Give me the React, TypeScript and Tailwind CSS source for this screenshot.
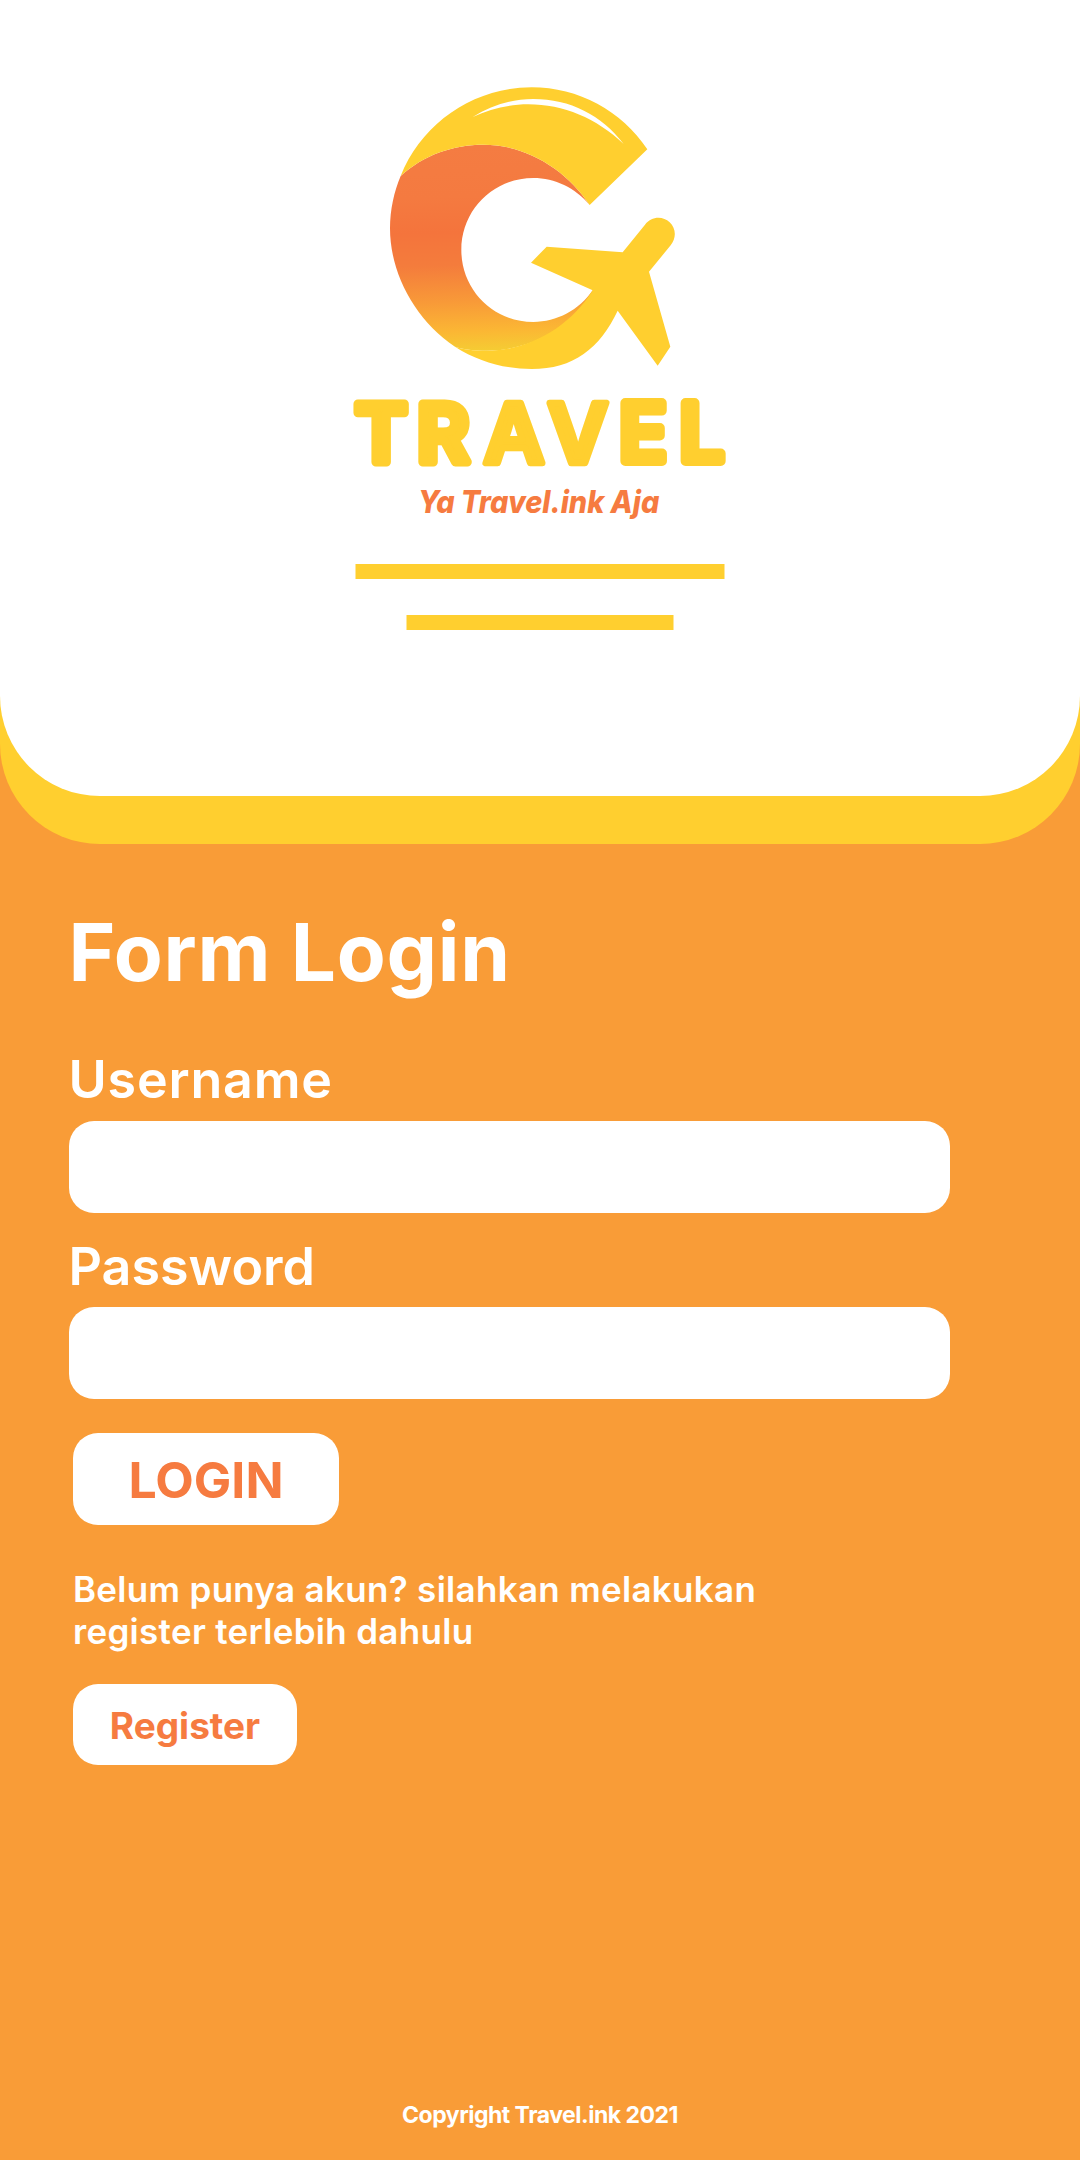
function Logo() {
  return (
    <svg className="mt-[60px] h-[470px] w-[400px] shrink-0" viewBox="0 0 1200 1410" role="img" aria-label="Travel.ink">
      <defs>
        <linearGradient id="crescent" gradientUnits="userSpaceOnUse" x1="420" y1="254" x2="440" y2="872">
          <stop offset="0" stopColor="#f47c42" />
          <stop offset="0.25" stopColor="#f47a40" />
          <stop offset="0.42" stopColor="#f4743c" />
          <stop offset="0.58" stopColor="#f47c3c" />
          <stop offset="0.76" stopColor="#f89a38" />
          <stop offset="0.9" stopColor="#fbb634" />
          <stop offset="1" stopColor="#f5cc33" />
        </linearGradient>
      </defs>
      <path
        fill="url(#crescent)"
        d="M182 348C250 285 340 254 430 254C560 254 680 330 749 435C705 383 645 354 580 354C460 354 364 450 364 570C364 690 460 786 580 786C650 786 718 750 758 691L765 700C690 805 570 872 440 872C400 872 370 868 345 860C225 780 150 640 150 505C150 450 162 395 182 348Z"
      />
      <path
        fill="#ffcf2f"
        d="M182 348C245 190 400 82 575 82C715 82 845 152 922 268L749 435C680 330 560 254 430 254C340 254 250 285 182 348Z"
      />
      <path
        fill="#fff"
        d="M398 171C455 136 515 117 580 117C690 117 785 165 851 252C770 175 670 133 565 133C505 133 450 147 398 171Z"
      />
      <path
        fill="#ffcf2f"
        d="M345 860C415 905 495 927 575 927C700 927 780 865 833 752L953 917L991 860L927 635L992 556C1010 533 1008 505 989 487C968 466 933 469 915 494L848 577L620 560L573 608L758 691C690 800 570 872 440 872C400 872 370 868 345 860Z"
      />
      <g className="font-['Inter',sans-serif]" fill="#ffcf2f" stroke="#ffcf2f" strokeLinejoin="round">
        <text className="font-semibold" fontSize="240" strokeWidth="27" y="1206">
          <tspan x="44">T</tspan>
          <tspan x="231">R</tspan>
        </text>
        <text className="font-semibold" fontSize="249" strokeWidth="20" y="1209">
          <tspan x="431">A</tspan>
          <tspan x="623">V</tspan>
        </text>
        <text className="font-medium" fontSize="238" strokeWidth="30" y="1204">
          <tspan x="837">E</tspan>
          <tspan x="1018">L</tspan>
        </text>
      </g>
      <text
        className="font-['Inter',sans-serif] font-extrabold italic"
        fontSize="94"
        x="234"
        y="1358"
        textLength="724"
        lengthAdjust="spacingAndGlyphs"
        fill="#f67b40"
      >
        Ya Travel.ink Aja
      </text>
    </svg>
  );
}

function Field({ label, id, type, className, labelClass }: { label: string; id: string; type: string; className: string; labelClass: string }) {
  return (
    <div className={className}>
      <label htmlFor={id} className={`block text-[52px] leading-[52px] font-semibold ${labelClass}`}>
        {label}
      </label>
      <input id={id} type={type} className="block h-[92px] w-[881px] rounded-[25px] bg-white px-6 text-4xl text-[#f67b40] outline-none" />
    </div>
  );
}

export default function App() {
  return (
    <div className="flex h-[2160px] w-[1080px] flex-col bg-[#f99c37] font-['Inter',sans-serif] text-white">
      <header className="h-[844px] shrink-0 rounded-b-[100px] bg-[#ffcf2f]">
        <div className="flex h-[796px] flex-col items-center rounded-b-[100px] bg-white">
          <Logo />
          <div className="mt-[33.5px] h-[15.5px] w-[369px] -translate-x-[0.5px] bg-[#ffcf2f]" />
          <div className="mt-[36px] h-[15px] w-[267px] -translate-x-[0.5px] bg-[#ffcf2f]" />
        </div>
      </header>

      <main className="flex grow flex-col items-start pl-[68.5px]">
        <h1 className="mt-[68px] text-[80px] leading-[80px] font-bold tracking-[0.7px]">Form Login</h1>
        <Field label="Username" id="username" type="text" className="mt-[61.5px]" labelClass="mb-[15px] tracking-[0.8px]" />
        <Field label="Password" id="password" type="password" className="mt-[28px]" labelClass="mb-[14px]" />
        <button className="mt-[34.5px] ml-[4.5px] h-[91.5px] w-[266px] rounded-[25px] bg-white pt-0.5 text-[50px] leading-[50px] font-bold text-[#f67b40]">
          LOGIN
        </button>
        <p className="mt-[43.5px] ml-[4.5px] text-[35px] leading-[42px] font-semibold tracking-[0.3px] whitespace-nowrap">
          Belum punya akun? silahkan melakukan
          <br />
          register terlebih dahulu
        </p>
        <button className="mt-[32px] ml-[4.5px] h-[80.5px] w-[224px] rounded-[25px] bg-white pt-0.5 text-[37px] leading-[37px] font-bold text-[#f67b40]">
          Register
        </button>
      </main>

      <footer className="mb-[31px] text-center text-[23px] leading-7 font-bold tracking-[-0.5px]">Copyright Travel.ink 2021</footer>
    </div>
  );
}
